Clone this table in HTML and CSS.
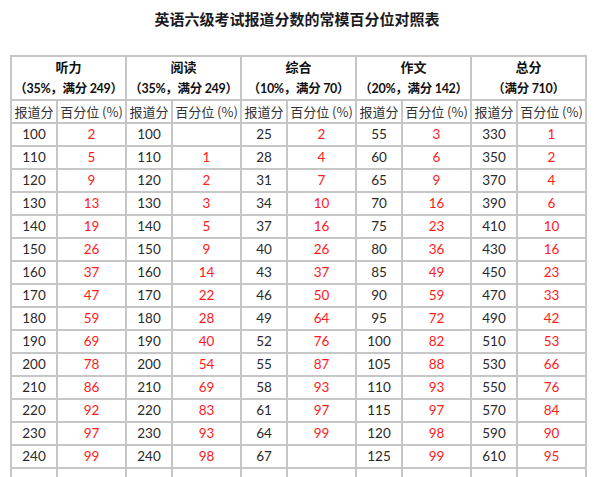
FILE: index.html
```html
<!DOCTYPE html>
<html lang="zh">
<head>
<meta charset="utf-8">
<link rel="stylesheet" href="styles.css">
</head>
<body>
<h1 class="title">英语六级考试报道分数的常模百分位对照表</h1>
<table class="grid">
<colgroup>
<col class="c-s"><col class="c-p">
<col class="c-s"><col class="c-p">
<col class="c-s"><col class="c-p">
<col class="c-s"><col class="c-p">
<col class="c-s"><col class="c-p">
</colgroup>
<thead>
<tr class="group">
<th colspan="2">听力<br><span class="w">（35%，满分 249）</span></th>
<th colspan="2">阅读<br><span class="w">（35%，满分 249）</span></th>
<th colspan="2">综合<br><span class="w">（10%，满分 70）</span></th>
<th colspan="2">作文<br><span class="w">（20%，满分 142）</span></th>
<th colspan="2">总分<br><span class="w">（满分 710）</span></th>
</tr>
<tr class="sub">
<td>报道分</td><td>百分位 (%)</td>
<td>报道分</td><td>百分位 (%)</td>
<td>报道分</td><td>百分位 (%)</td>
<td>报道分</td><td>百分位 (%)</td>
<td>报道分</td><td>百分位 (%)</td>
</tr>
</thead>
<tbody>
<tr><td>100</td><td class="r">2</td><td>100</td><td class="r"></td><td>25</td><td class="r">2</td><td>55</td><td class="r">3</td><td>330</td><td class="r">1</td></tr>
<tr><td>110</td><td class="r">5</td><td>110</td><td class="r">1</td><td>28</td><td class="r">4</td><td>60</td><td class="r">6</td><td>350</td><td class="r">2</td></tr>
<tr><td>120</td><td class="r">9</td><td>120</td><td class="r">2</td><td>31</td><td class="r">7</td><td>65</td><td class="r">9</td><td>370</td><td class="r">4</td></tr>
<tr><td>130</td><td class="r">13</td><td>130</td><td class="r">3</td><td>34</td><td class="r">10</td><td>70</td><td class="r">16</td><td>390</td><td class="r">6</td></tr>
<tr><td>140</td><td class="r">19</td><td>140</td><td class="r">5</td><td>37</td><td class="r">16</td><td>75</td><td class="r">23</td><td>410</td><td class="r">10</td></tr>
<tr><td>150</td><td class="r">26</td><td>150</td><td class="r">9</td><td>40</td><td class="r">26</td><td>80</td><td class="r">36</td><td>430</td><td class="r">16</td></tr>
<tr><td>160</td><td class="r">37</td><td>160</td><td class="r">14</td><td>43</td><td class="r">37</td><td>85</td><td class="r">49</td><td>450</td><td class="r">23</td></tr>
<tr><td>170</td><td class="r">47</td><td>170</td><td class="r">22</td><td>46</td><td class="r">50</td><td>90</td><td class="r">59</td><td>470</td><td class="r">33</td></tr>
<tr><td>180</td><td class="r">59</td><td>180</td><td class="r">28</td><td>49</td><td class="r">64</td><td>95</td><td class="r">72</td><td>490</td><td class="r">42</td></tr>
<tr><td>190</td><td class="r">69</td><td>190</td><td class="r">40</td><td>52</td><td class="r">76</td><td>100</td><td class="r">82</td><td>510</td><td class="r">53</td></tr>
<tr><td>200</td><td class="r">78</td><td>200</td><td class="r">54</td><td>55</td><td class="r">87</td><td>105</td><td class="r">88</td><td>530</td><td class="r">66</td></tr>
<tr><td>210</td><td class="r">86</td><td>210</td><td class="r">69</td><td>58</td><td class="r">93</td><td>110</td><td class="r">93</td><td>550</td><td class="r">76</td></tr>
<tr><td>220</td><td class="r">92</td><td>220</td><td class="r">83</td><td>61</td><td class="r">97</td><td>115</td><td class="r">97</td><td>570</td><td class="r">84</td></tr>
<tr><td>230</td><td class="r">97</td><td>230</td><td class="r">93</td><td>64</td><td class="r">99</td><td>120</td><td class="r">98</td><td>590</td><td class="r">90</td></tr>
<tr><td>240</td><td class="r">99</td><td>240</td><td class="r">98</td><td>67</td><td class="r"></td><td>125</td><td class="r">99</td><td>610</td><td class="r">95</td></tr>
<tr><td></td><td class="r"></td><td></td><td class="r"></td><td></td><td class="r"></td><td></td><td class="r"></td><td></td><td class="r"></td></tr>
</tbody>
</table>
</body>
</html>
```

FILE: styles.css
```css
html, body {
  margin: 0;
  padding: 0;
  background: #ffffff;
}
body {
  font-family: "Lato", "Noto Sans CJK SC", sans-serif;
  color: #333333;
}
.title {
  margin: 0;
  padding-top: 9px;
  height: 55px;
  box-sizing: border-box;
  text-align: center;
  font-family: "Noto Sans CJK SC", sans-serif;
  font-size: 15px;
  line-height: 20px;
  font-weight: 700;
  color: #1a1a22;
}
.grid {
  margin-left: 10px;
  border-collapse: collapse;
  table-layout: fixed;
  width: 577px;
}
.c-s { width: 46px; }
.c-p { width: 69px; }
.grid th, .grid td {
  border: 2px solid #c6c6c6;
  padding: 0;
  text-align: center;
  overflow: hidden;
  white-space: nowrap;
}
.group th {
  height: 42px;
  font-family: "Lato", "Noto Sans CJK SC", sans-serif;
  font-size: 13px;
  line-height: 21px;
  font-weight: 700;
  color: #111111;
}
.group .w {
  font-size: 12.5px;
  letter-spacing: -0.3px;
}
.sub td {
  height: 21px;
  font-family: "Noto Sans CJK SC", sans-serif;
  font-size: 13px;
  line-height: 20px;
  color: #333333;
}
tbody td {
  height: 21px;
  font-size: 13.5px;
  line-height: 21px;
  color: #2a2a2a;
}
tbody td.r {
  color: #ff1a1a;
}
```
